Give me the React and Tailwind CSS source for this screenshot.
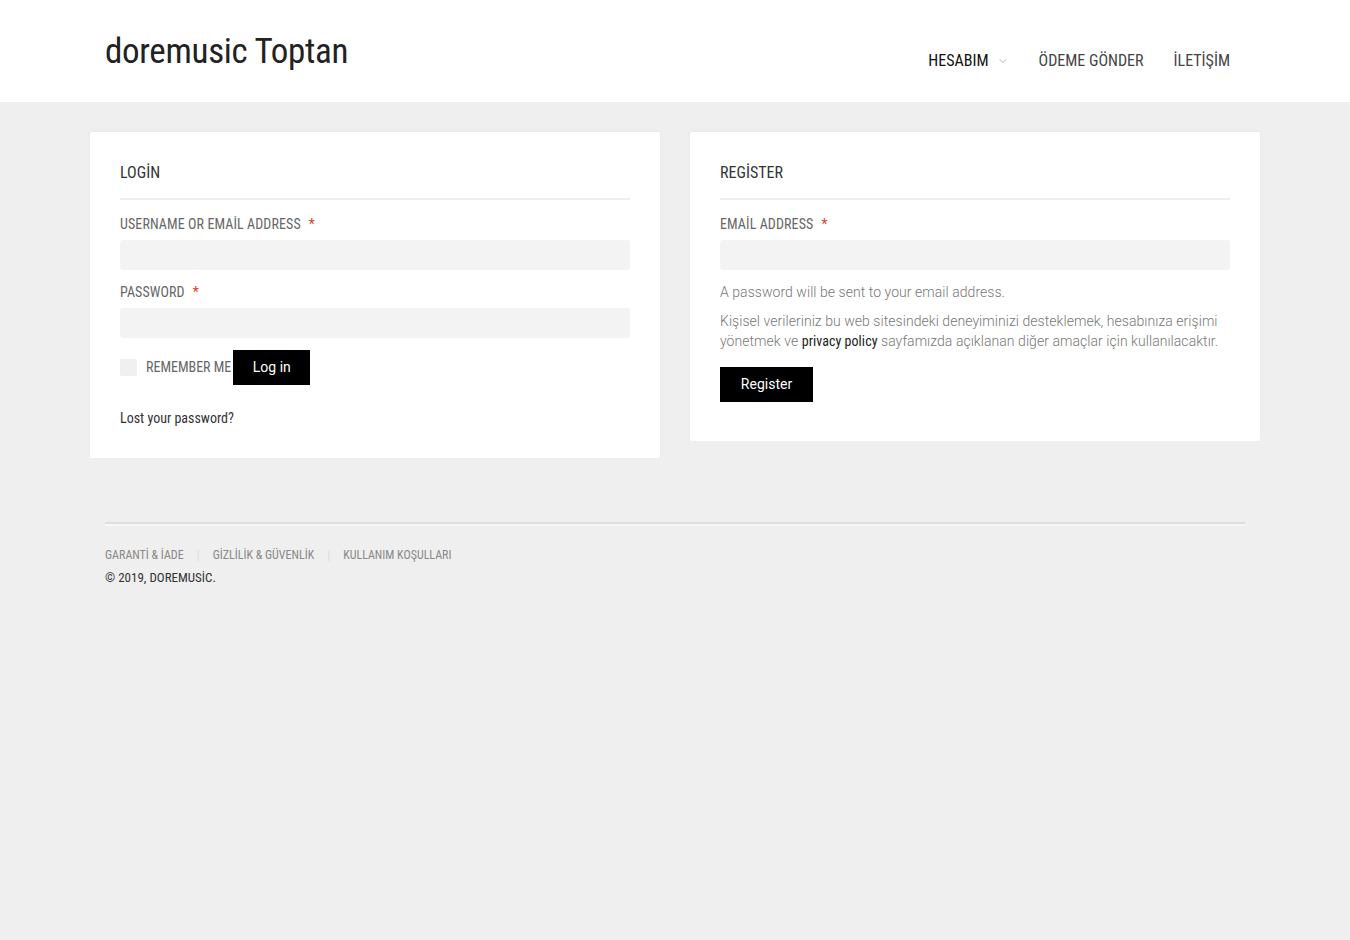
import { ChevronDown } from 'lucide-react'

const cond = "font-['Roboto_Condensed','Roboto',sans-serif] font-stretch-[75%]"
const body = "font-['Roboto',sans-serif]"

function Label({ children }) {
  return (
    <label className={`${cond} mb-[6px] block text-[14px] uppercase leading-[20px] tracking-[0.1px] text-[#666]`}>
      {children}
      <span className="ml-[8px] text-[#e2401c]">*</span>
    </label>
  )
}

function Field({ type = 'text' }) {
  return (
    <input
      type={type}
      className="block h-[30px] w-full rounded-[3px] bg-[#f3f3f3] px-2 text-sm outline-none"
    />
  )
}

function Card({ title, children }) {
  return (
    <div className="rounded-[2px] bg-white px-[30px] pt-[31px] pb-[30px] shadow-[0_-1px_3px_rgba(0,0,0,0.04)]">
      <h2 className={`${cond} border-b-2 border-[#eee] pb-[15px] text-[16px] leading-[20px] text-[#333]`}>
        {title}
      </h2>
      <div className="pt-[14px]">{children}</div>
    </div>
  )
}

export default function App() {
  return (
    <div className="min-h-[940px] bg-[#efefef]">
      <header className="bg-white">
        <div className="mx-auto flex h-[102px] w-[1140px] items-start justify-between">
          <h1 className={`${cond} mt-[31px] text-[35px] leading-[42px] tracking-[-0.3px] text-[#222]`}>
            doremusic Toptan
          </h1>
          <nav className={`${cond} mt-[50px] flex items-center gap-[30px] text-[16px] uppercase leading-[22px] text-[#444]`}>
            <a className="flex items-center gap-[8px] text-[#111]">
              HESABIM
              <ChevronDown size={12} strokeWidth={1.5} className="text-[#999]" />
            </a>
            <a>ÖDEME GÖNDER</a>
            <a className="mr-[15px]">İLETİŞİM</a>
          </nav>
        </div>
      </header>

      <main className="mx-auto mt-[30px] grid w-[1170px] grid-cols-2 items-start gap-[30px]">
        <Card title="LOGİN">
          <Label>USERNAME OR EMAİL ADDRESS</Label>
          <Field />
          <div className="mt-[12px]">
            <Label>PASSWORD</Label>
            <Field type="password" />
          </div>
          <div className="mt-[12px] flex items-center">
            <span className="h-[17px] w-[17px] rounded-[2px] bg-[#f0f0f0]" />
            <span className={`${cond} ml-[9px] text-[14px] uppercase text-[#666]`}>REMEMBER ME</span>
            <button className={`${body} ml-[2px] h-[35px] w-[77px] bg-black text-[14px] text-white`}>
              Log in
            </button>
          </div>
          <a className={`${cond} mt-[23px] block text-[14px] leading-[20px] text-[#333]`}>
            Lost your password?
          </a>
        </Card>

        <Card title="REGİSTER">
          <Label>EMAİL ADDRESS</Label>
          <Field type="email" />
          <p className={`${body} mt-[12px] text-[14px] leading-[20px] font-light tracking-[0.05px] text-[#777]`}>
            A password will be sent to your email address.
          </p>
          <p className={`${body} mt-[9px] text-[14px] leading-[20px] font-light tracking-[0.05px] text-[#777]`}>
            Kişisel verileriniz bu web sitesindeki deneyiminizi desteklemek, hesabınıza erişimi yönetmek ve{' '}
            <a className={`${cond} font-normal text-[#222]`}>privacy policy</a> sayfamızda açıklanan diğer
            amaçlar için kullanılacaktır.
          </p>
          <button className={`${body} mt-[16px] mb-[9px] block h-[35px] w-[93px] bg-black text-[14px] text-white`}>
            Register
          </button>
        </Card>
      </main>

      <footer className="mx-auto mt-[64px] w-[1140px]">
        <div className="border-t-[2px] border-[#dedede] border-b-[2px] border-b-[#f7f7f7]" />
        <ul className={`${cond} mt-[21px] flex items-center text-[12px] uppercase leading-[16px] text-[#888]`}>
          <li>GARANTİ &amp; İADE</li>
          <li className="mx-[13px] text-[#ddd]">|</li>
          <li>GİZLİLİK &amp; GÜVENLİK</li>
          <li className="mx-[13px] text-[#ddd]">|</li>
          <li>KULLANIM KOŞULLARI</li>
        </ul>
        <p className={`${cond} mt-[7px] text-[13px] uppercase leading-[16px] text-[#333]`}>
          © 2019, DOREMUSİC.
        </p>
      </footer>
    </div>
  )
}
